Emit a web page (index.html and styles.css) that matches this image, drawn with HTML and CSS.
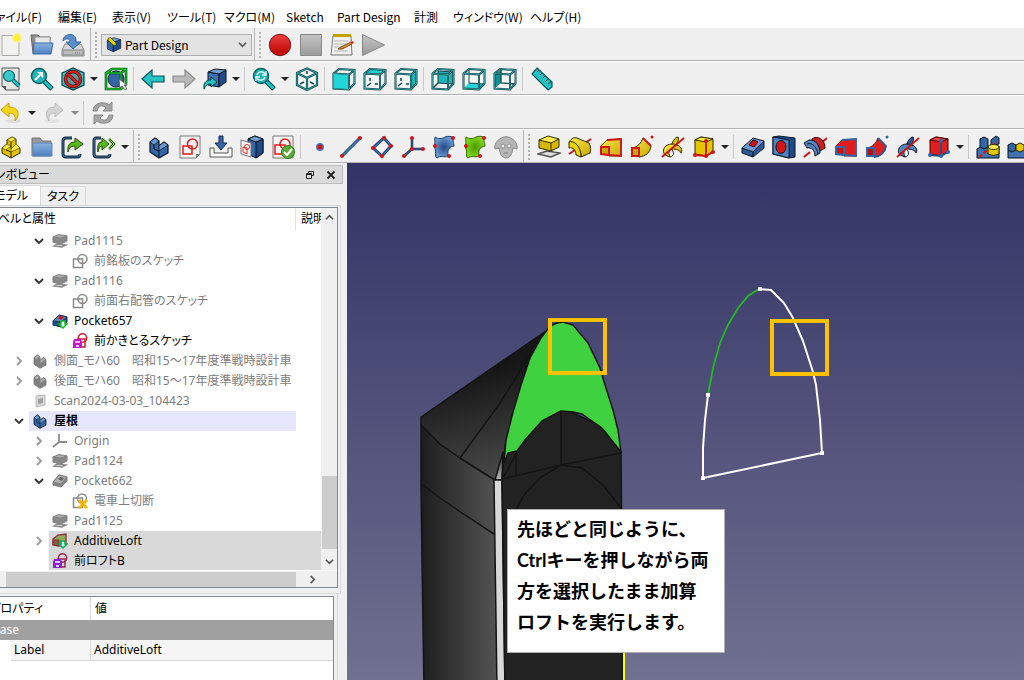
FILE: index.html
```html
<!DOCTYPE html>
<html lang="ja">
<head>
<meta charset="utf-8">
<title>Part Design</title>
<link rel="stylesheet" href="styles.css">
</head>
<body>
<svg class="sprite" aria-hidden="true">
<defs>
<linearGradient id="g-gray" x1="0" y1="0" x2="0" y2="1"><stop offset="0" stop-color="#c4c4c4"/><stop offset="1" stop-color="#9a9a9a"/></linearGradient>
<linearGradient id="g-blue" x1="0" y1="0" x2="0" y2="1"><stop offset="0" stop-color="#8db4e0"/><stop offset="1" stop-color="#4d7fc0"/></linearGradient>
<linearGradient id="g-red" x1="0" y1="0" x2="0" y2="1"><stop offset="0" stop-color="#f04040"/><stop offset="1" stop-color="#b80000"/></linearGradient>
<linearGradient id="g-yel" x1="0" y1="0" x2="1" y2="1"><stop offset="0" stop-color="#fce94f"/><stop offset="1" stop-color="#c9a800"/></linearGradient>
<radialGradient id="g-surf"><stop offset="0" stop-color="#214a83"/><stop offset="1" stop-color="#6b9bd2"/></radialGradient>
<radialGradient id="g-surfg"><stop offset="0" stop-color="#4e9a06"/><stop offset="1" stop-color="#7fd81c"/></radialGradient>
</defs>
<symbol id="new" viewBox="0 0 24 24"><path d="M3 2.500h17v20H3z" fill="#f2f2f0" stroke="#a9a9a4"/><circle cx="18" cy="5" r="5" fill="#f7f08a"/><circle cx="18" cy="5" r="3" fill="#fff12b"/></symbol>
<symbol id="open" viewBox="0 0 24 24"><path d="M1 2h7l2 2h10v16H3z" fill="#8b8b8b" stroke="#666"/><path d="M5 4h15v12H5z" fill="#e8e8e8" stroke="#999"/><path d="M4 10h19l-2 11H3z" fill="url(#g-blue)" stroke="#3b6cac"/></symbol>
<symbol id="save" viewBox="0 0 24 24"><path d="M4 11h16l3 6v6H1v-6z" fill="#d6d6d6" stroke="#888"/><path d="M2 17h20v5H2z" fill="#bdbdbd" stroke="#888"/><path d="M14 20h6" stroke="#777" stroke-dasharray="1 1"/><path d="M2 8c0-8 13-9 13-1v2h5l-8 7-7-7h4c0-4-4-4-7-1z" fill="#5a8ec8" stroke="#3465a4"/></symbol>
<symbol id="pd" viewBox="0 0 24 24"><path d="M2 5l9 3v14l-9-4z" fill="#3465a4" stroke="#0b1521"/><path d="M11 8l11-4v13l-11 5z" fill="#204a87" stroke="#0b1521"/><path d="M2 5l10-4 10 3-11 4z" fill="#729fcf" stroke="#0b1521"/><path d="M3 2l4-1 8 8 0 4-4-1-8-7z" fill="#edd400" stroke="#302b00"/></symbol>
<symbol id="rec" viewBox="0 0 24 24"><circle cx="12" cy="12" r="10.700" fill="url(#g-red)" stroke="#7d1414"/></symbol>
<symbol id="stop" viewBox="0 0 24 24"><path d="M1.500 1.500h21v21h-21z" fill="url(#g-gray)" stroke="#888"/></symbol>
<symbol id="edit" viewBox="0 0 24 24"><path d="M3 3h18l1 19H1z" fill="#f0f0ee" stroke="#777"/><path d="M3 1h18v3H3z" fill="#c4a000"/><path d="M4 8h14M4 11h12M4 14h10M4 18h14" stroke="#b5b5b5"/><path d="M8 16l3-2 10-5 1 2-10 5z" fill="#e0943a" stroke="#7d4a12"/><path d="M20 9l3-1 1 2-2 1z" fill="#d33"/></symbol>
<symbol id="play" viewBox="0 0 24 24"><path d="M1.500 1.500l22 10.500-22 10.500z" fill="url(#g-gray)" stroke="#888"/></symbol>
<symbol id="fitpage" viewBox="0 0 24 24"><path d="M3 1h17v22H7l-4-4z" fill="#e4e4e4" stroke="#555"/><path d="M3 19h4v4" fill="#555"/><path d="M14 13l6 6" stroke="#0b3d40" stroke-width="4"/><path d="M14 13l6 6" stroke="#16c8ca" stroke-width="2.500"/><circle cx="10" cy="9" r="5.500" fill="#35c8c8" stroke="#0b5f62" stroke-width="1.200"/></symbol>
<symbol id="fit" viewBox="0 0 24 24"><path d="M13 13l9 9" stroke="#0b3d40" stroke-width="5"/><path d="M13 13l8.500 8.500" stroke="#16c8ca" stroke-width="3"/><circle cx="9" cy="9" r="7.500" fill="#22b4b6" stroke="#0b5f62" stroke-width="1.500"/><path d="M5 13l5-5" stroke="#fff" stroke-width="2"/><path d="M7 5h6v6z" fill="#fff"/></symbol>
<symbol id="nodraw" viewBox="0 0 24 24"><path d="M1 6L12 1l11 5v12l-11 5-11-5z" fill="#25c9cb" stroke="#0b3d40" stroke-width="1.200"/><circle cx="12" cy="12" r="7.500" fill="#5b9a9c" stroke="#550b0b" stroke-width="3.500"/><circle cx="12" cy="12" r="7.500" fill="none" stroke="#d92020" stroke-width="2.200"/><path d="M6.500 7l11 10" stroke="#550b0b" stroke-width="3.500"/><path d="M6.500 7l11 10" stroke="#d92020" stroke-width="2.200"/></symbol>
<symbol id="boxsel" viewBox="0 0 24 24"><path d="M2 6l6-4h14v15l-5 5H2z" fill="#eef4ee"/><circle cx="12" cy="12" r="8" fill="#3465a4" stroke="#12294a"/><path d="M2 6l6-4h14v15l-5 5H2zM2 6h15v16M17 6l5-4" fill="none" stroke="#064d0e" stroke-width="2.600"/><path d="M2 6l6-4h14v15l-5 5H2zM2 6h15v16M17 6l5-4" fill="none" stroke="#17b92b" stroke-width="1.400"/><path d="M15 12l1 9 2-2 3 4 2-1-3-4h3z" fill="#fff" stroke="#555" stroke-width=".8"/></symbol>
<symbol id="left" viewBox="0 0 24 24"><path d="M1 12l10-9v6h12v6H11v6z" fill="#26c4c6" stroke="#0b5558" stroke-width="1.200"/></symbol>
<symbol id="right" viewBox="0 0 24 24"><path d="M23 12L13 3v6H1v6h12v6z" fill="#b9b9b9" stroke="#8c8c8c" stroke-width="1.200"/></symbol>
<symbol id="link" viewBox="0 0 24 24"><path d="M5 5l11 2v13L5 18z" fill="#3c6fb0" stroke="#0b1521"/><path d="M16 7l7-4v12l-7 5z" fill="#204a87" stroke="#0b1521"/><path d="M5 5l7-3 11 1-7 4z" fill="#6f9fd6" stroke="#0b1521"/><path d="M1 22c-1-8 4-9 7-9v-3l6 5-6 5v-3c-3 0-5 1-7 5z" fill="#26c4c6" stroke="#0b3d40"/></symbol>
<symbol id="sync" viewBox="0 0 24 24"><path d="M13 13l9 9" stroke="#0b3d40" stroke-width="5"/><path d="M13 13l8.500 8.500" stroke="#16c8ca" stroke-width="3"/><circle cx="9" cy="9" r="7.500" fill="#22b4b6" stroke="#0b5f62" stroke-width="1.500"/><path d="M5 8c1-4 7-4 8-1M13 10c-1 4-7 4-8 1M14 4v4h-4M4 14v-4h4" stroke="#e4ffff" fill="none" stroke-width="1.300"/></symbol>
<symbol id="iso" viewBox="0 0 24 24"><path d="M12 1.500L22 6v12l-10 5-10-5V6zM2 6l10 5 10-5M12 11v12" fill="#f7f7f7" stroke="#0b4549" stroke-width="2.200"/><path d="M12 4v3M5 17l4-2M19 17l-4-2" stroke="#0b4549" stroke-width="1.500"/><path d="M12 1.500L22 6v12l-10 5-10-5V6zM2 6l10 5 10-5M12 11v12" fill="none" stroke="#39b9bb" stroke-width=".8"/></symbol>
<symbol id="frame" viewBox="0 0 24 24"><path d="M1.500 6.500L7 2l15.500 1v13.500L17 22.500l-15.500-1zM1.500 6.500L17 7.500v15M17 7.500L22.500 3" fill="none" stroke="#0b4549" stroke-width="2"/><path d="M1.500 6.500L7 2l15.500 1v13.500L17 22.500l-15.500-1zM1.500 6.500L17 7.500v15M17 7.500L22.500 3" fill="none" stroke="#48b4b6" stroke-width=".7"/></symbol>
<symbol id="front" viewBox="0 0 24 24"><path d="M2 6l5-4 15 1v14l-5 5-15-1z" fill="#eee"/><use href="#frame"/><path d="M2 7l14 1v14L2 21z" fill="#22d6d8"/></symbol>
<symbol id="top" viewBox="0 0 24 24"><path d="M2 6l15 1 5-4v14l-5 5-15-1z" fill="#f7f7f7"/><path d="M7 11v3M4 19l4-3M12 17h3" stroke="#0b4549" stroke-width="1.500"/><path d="M2 6l5-4 15 1-5 4z" fill="#22d6d8"/><use href="#frame"/></symbol>
<symbol id="rside" viewBox="0 0 24 24"><path d="M2 6l5-4 15 1-5 19-15-1z" fill="#f7f7f7"/><path d="M7 11v3M4 19l4-3M12 17h3" stroke="#0b4549" stroke-width="1.500"/><path d="M17 7l5-4v14l-5 5z" fill="#20b4b8"/><use href="#frame"/></symbol>
<symbol id="rear" viewBox="0 0 24 24"><path d="M2 6l5-4 15 1v14l-5 5-15-1z" fill="#f7f7f7"/><path d="M7 4l15 1v12L7 16z" fill="#20b4b8" stroke="#0b4549"/><path d="M2 21l5-5" stroke="#0b4549" stroke-width="1.500"/><use href="#frame"/></symbol>
<symbol id="bottom" viewBox="0 0 24 24"><path d="M2 6l5-4 15 1v14l-5 5-15-1z" fill="#f7f7f7"/><path d="M2 21l5-5 15 1-5 5z" fill="#22d6d8"/><path d="M7 2v14l15 1" stroke="#0b4549" fill="none"/><use href="#frame"/></symbol>
<symbol id="lside" viewBox="0 0 24 24"><path d="M2 6l5-4 15 1v14l-5 5-15-1z" fill="#f7f7f7"/><path d="M2 7l6-4v13l-6 5z" fill="#168f94"/><path d="M8 2v14l14 1" stroke="#0b4549" fill="none" stroke-width="1.300"/><use href="#frame"/></symbol>
<symbol id="ruler" viewBox="0 0 24 24"><path d="M7 1l15 14v5l-4 3L2 7z" fill="#22c4c6" stroke="#0b5558" stroke-width="1.200"/><path d="M9 3L7 5M12 6l-2 2M15 9l-2 2M18 12l-3 3M21 15l-3 2" stroke="#0b3d40"/></symbol>
<symbol id="undo" viewBox="0 0 24 24"><ellipse cx="14" cy="20" rx="8" ry="2" fill="#ddd"/><path d="M2 9l8-7v4c9 0 12 7 6 14 1-6-2-8-6-8v4z" fill="#f4d51c" stroke="#c4a000"/></symbol>
<symbol id="redo" viewBox="0 0 24 24"><ellipse cx="10" cy="20" rx="8" ry="2" fill="#e2e2e2"/><path d="M21 9l-8-7v4C4 6 2 13 7 20c-1-6 2-8 6-8v4z" fill="#d4d4d4" stroke="#bbb"/></symbol>
<symbol id="refresh" viewBox="0 0 24 24"><path d="M2 10c0-9 12-10 16-6l3-3v9h-9l3-3c-4-4-8-2-9 3zM22 14c0 9-12 10-16 6l-3 3v-9h9l-3 3c4 4 8 2 9-3z" fill="#a5a5a5" stroke="#8b8b8b"/></symbol>
<symbol id="part" viewBox="0 0 24 24"><path d="M3 13l5-4V5l5-3 4 2v5l4 4v5l-9 5-9-5z" fill="#e2c300" stroke="#302b00"/><path d="M8 5l5-3 4 2-5 3zM3 13l5-4 4 2-5 4zM12 14l5-5 4 4-9 4z" fill="#fce94f" stroke="#6b5b00" stroke-width=".8"/><path d="M12 7v7M7 15l5 2v6" fill="none" stroke="#302b00"/></symbol>
<symbol id="folder" viewBox="0 0 24 24"><path d="M2 3h8l2 3h9v15H2z" fill="#999" stroke="#777"/><path d="M3 8h19v13H3z" fill="url(#g-blue)" stroke="#5c87bd"/></symbol>
<symbol id="export" viewBox="0 0 24 24"><path d="M11 3H5q-3 0-3 3v13q0 3 3 3h11q3 0 3-3" fill="none" stroke="#152c48" stroke-width="3"/><path d="M11 3H5q-3 0-3 3v13q0 3 3 3h11q3 0 3-3" fill="none" stroke="#3b6185" stroke-width="1.200"/><path d="M7 17c-1-8 3-10 7-10V3l8 6-8 6v-4c-4 0-6 2-7 6z" fill="#5cb81b" stroke="#1d4b00"/></symbol>
<symbol id="export2" viewBox="0 0 24 24"><path d="M9 3H4Q2 3 2 6v13q0 3 3 3h10q3 0 3-3" fill="none" stroke="#152c48" stroke-width="3"/><path d="M9 3H4Q2 3 2 6v13q0 3 3 3h10q3 0 3-3" fill="none" stroke="#3b6185" stroke-width="1.200"/><path d="M6 17C5 9 7 7 10 7V3l7 6-7 6v-4c-2 0-3 2-4 6z" fill="#5cb81b" stroke="#1d4b00"/><path d="M17 4l5 5-5 5" fill="none" stroke="#2d6a04" stroke-width="2.500"/><path d="M17 4l5 5-5 5" fill="none" stroke="#73c83a"/></symbol>
<symbol id="body" viewBox="0 0 24 24"><path d="M3 7l5-4 4 3v5l5-4 4 3v8l-9 5-9-6z" fill="#3465a4" stroke="#0b1521" stroke-width="1.200"/><path d="M3 7l5-4 4 3-5 4zM12 11l5-4 4 3-9 6z" fill="#6b9bd2" stroke="#0b1521" stroke-width=".8"/><path d="M7 10v4l5 2v7" fill="none" stroke="#0b1521"/></symbol>
<symbol id="bodyg" viewBox="0 0 24 24"><path d="M3 7l5-4 4 3v5l5-4 4 3v8l-9 5-9-6z" fill="#808080" stroke="#777" stroke-width="1.200"/><path d="M3 7l5-4 4 3-5 4zM12 11l5-4 4 3-9 6z" fill="#ababab" stroke="#777"/></symbol>
<symbol id="sketch" viewBox="0 0 24 24"><path d="M2 1h20v18l-4 4H2z" fill="#f5f5f5" stroke="#777"/><path d="M22 19h-4v4z" fill="#777"/><g fill="none" stroke="#e01b1b" stroke-width="1.500"><path d="M5 11h9v8H5z"/><circle cx="14.500" cy="9" r="5"/></g></symbol>
<symbol id="map" viewBox="0 0 24 24"><path d="M1 13h4v5h14v-5h4v9H1z" fill="#fff" stroke="#555"/><path d="M10 1h4v7h4l-6 7-6-7h4z" fill="#3465a4" stroke="#12294a"/></symbol>
<symbol id="shape" viewBox="0 0 24 24"><path d="M8 4l7-3 8 3v14l-7 5-8-4z" fill="#3465a4" stroke="#0b1521"/><path d="M16 7l7-3v14l-7 5z" fill="#204a87" stroke="#0b1521"/><path d="M8 4l7-3 8 3-7 3z" fill="#729fcf" stroke="#0b1521"/><path d="M1 5l10 3v14L1 19z" fill="#f5f5f5" stroke="#777"/><g fill="none" stroke="#e03030"><path d="M3 12l4 1v6l-4-2z"/><circle cx="7" cy="12" r="2.500"/></g></symbol>
<symbol id="valid" viewBox="0 0 24 24"><path d="M2 1h20v22H2z" fill="#f5f5f5" stroke="#777"/><path d="M4 10h10v9H4z" fill="none" stroke="#e01b1b" stroke-width="1.500"/><circle cx="14" cy="9" r="5" fill="none" stroke="#e01b1b" stroke-width="1.500"/><circle cx="17" cy="17" r="6.500" fill="#5cab3a" stroke="#337518"/><path d="M13 17l3 3 5-6" fill="none" stroke="#fff" stroke-width="2"/></symbol>
<symbol id="point" viewBox="0 0 24 24"><circle cx="12" cy="12" r="4" fill="#4779b8"/><circle cx="12" cy="12" r="2.500" fill="#d31515"/></symbol>
<symbol id="line" viewBox="0 0 24 24"><path d="M3 21L21 3" stroke="#122d50" stroke-width="3"/><path d="M3 21L21 3" stroke="#3c73b5" stroke-width="1.800"/><g fill="#d31515"><circle cx="3" cy="21" r="2"/><circle cx="21" cy="3" r="2"/></g></symbol>
<symbol id="plane" viewBox="0 0 24 24"><path d="M14 3l7 8-9 10-9-8z" fill="none" stroke="#122d50" stroke-width="3"/><path d="M14 3l7 8-9 10-9-8z" fill="none" stroke="#3c73b5" stroke-width="1.500"/><g fill="#d31515"><circle cx="14" cy="3" r="2"/><circle cx="21" cy="11" r="2"/><circle cx="12" cy="21" r="2"/><circle cx="3" cy="13" r="2"/></g></symbol>
<symbol id="lcs" viewBox="0 0 24 24"><path d="M11 3v11h11M11 14l-8 7" fill="none" stroke="#122d50" stroke-width="2.500"/><path d="M11 3v11h11M11 14l-8 7" fill="none" stroke="#3c73b5"/><g fill="#d31515"><circle cx="11" cy="3" r="2"/><circle cx="22" cy="14" r="2"/><circle cx="11" cy="14" r="2"/><circle cx="3" cy="21" r="2"/></g></symbol>
<symbol id="surf" viewBox="0 0 24 24"><path d="M3 2c3 2 7 2 10 0 3-1 6-1 9 1-2 2 0 5 0 8-4 1-7 2-6 10-4 2-7-1-11 2-3-1 0-7-3-12 2-3 0-6 1-9z" fill="url(#g-surf)" stroke="#173a67"/><g fill="#d31515"><circle cx="21" cy="3" r="2"/><circle cx="3" cy="11" r="2"/><circle cx="17" cy="21" r="2"/></g></symbol>
<symbol id="surfg" viewBox="0 0 24 24"><path d="M3 2c3 2 7 2 10 0 3-1 6-1 9 1-2 2 0 5 0 8-4 1-7 2-6 10-4 2-7-1-11 2-3-1 0-7-3-12 2-3 0-6 1-9z" fill="url(#g-surfg)" stroke="#2f6600"/><g fill="#d31515"><circle cx="21" cy="3" r="2"/><circle cx="3" cy="11" r="2"/><circle cx="17" cy="21" r="2"/></g></symbol>
<symbol id="clone" viewBox="0 0 24 24"><path d="M6 4c3-3 9-3 12 0 3 1 6 6 5 10l-4-1c-1 6-3 10-7 10s-6-4-7-10l-4 1C0 10 3 5 6 4z" fill="#b5b5b5" stroke="#888"/><circle cx="9" cy="11" r="2" fill="#eee" stroke="#888"/><circle cx="15" cy="11" r="2" fill="#eee" stroke="#888"/><path d="M10 18h4" stroke="#888"/></symbol>
<symbol id="pad" viewBox="0 0 24 24"><path d="M1 19l9-3 13 2-9 4z" fill="#ddd" stroke="#555" stroke-width="1.500"/><path d="M2 5v8l12 3 8-4V4z" fill="#d7b600" stroke="#302b00"/><path d="M2 5l9-4 11 3-8 4z" fill="#fce94f" stroke="#302b00"/><path d="M14 8v8" stroke="#302b00"/></symbol>
<symbol id="revolve" viewBox="0 0 24 24"><path d="M1 19L23 4" stroke="#c11" stroke-width="2"/><path d="M1 7c3-4 5-5 8-4l12 5c2 4 2 7 1 10l-9 4c0-3 0-5-2-8z" fill="url(#g-yel)" stroke="#302b00"/><path d="M1 7c5-2 12 4 12 15l-5-2c0-5-3-8-7-7z" fill="#edd400" stroke="#302b00"/></symbol>
<symbol id="loft" viewBox="0 0 24 24"><path d="M2 11l6-6 14-1v17l-12 0z" fill="url(#g-yel)" stroke="#746000"/><path d="M8 5l14-1v17l-12-1" fill="none" stroke="#c11" stroke-width="1.800"/><path d="M2 12h8v8l-8-1z" fill="#c9a800" stroke="#d31515" stroke-width="2"/></symbol>
<symbol id="pipe" viewBox="0 0 24 24"><path d="M2 13c6-1 9-5 11-10l8 8c-1 7-5 10-12 11z" fill="url(#g-yel)" stroke="#302b00"/><path d="M13 3l8 8" stroke="#c11" stroke-width="2"/><path d="M2 13h7v8H2z" fill="#c9a800" stroke="#d31515" stroke-width="2"/><circle cx="22" cy="2" r="1.500" fill="#c11"/></symbol>
<symbol id="helix" viewBox="0 0 24 24"><path d="M10 12c1-5 4-10 7-10 2 3-2 5-1 9" fill="#e0c000" stroke="#302b00"/><path d="M4 20c-4-5 0-11 7-11 6 0 12 4 9 9-1-3-5-4-9-4-3 0-4 4-2 8z" fill="url(#g-yel)" stroke="#302b00"/><path d="M9 22c5-1 4-6 1-8" fill="none" stroke="#302b00"/><path d="M1 22L23 3" stroke="#c11" stroke-width="1.800"/></symbol>
<symbol id="prim" viewBox="0 0 24 24"><path d="M3 5l6-3 12 2v12l-7 5-11-2z" fill="#e5c700" stroke="#302b00"/><path d="M3 5l6-3 12 2-7 3z" fill="#fce94f" stroke="#302b00"/><path d="M14 6v15M3 20l11 1 7-4" fill="none" stroke="#c11" stroke-width="1.800"/><g fill="#d31515"><circle cx="14" cy="6" r="2"/><circle cx="3" cy="20" r="2"/><circle cx="14" cy="21" r="2"/><circle cx="21" cy="17" r="2"/></g></symbol>
<symbol id="pocket" viewBox="0 0 24 24"><path d="M1 13v5l11 4 11-9V6z" fill="#2d5a96" stroke="#0b1521"/><path d="M1 13L12 3l11 3-11 11z" fill="#6b9bd2" stroke="#0b1521"/><path d="M8 10l4-5 5 2-4 5z" fill="#d31515" stroke="#400"/><path d="M12 17v5" stroke="#0b1521"/></symbol>
<symbol id="hole" viewBox="0 0 24 24"><path d="M1 2l6-1 16 2v19l-6 1-16-4z" fill="#204a87" stroke="#0b1521"/><path d="M1 2l16 3v18L1 19z" fill="#4f83c1" stroke="#0b1521"/><ellipse cx="9" cy="12" rx="5" ry="6.500" fill="#d31515" stroke="#0b1521"/></symbol>
<symbol id="groove" viewBox="0 0 24 24"><path d="M1 22l6-5M16 10l8-7" stroke="#c11" stroke-width="2"/><path d="M9 4c5-4 13 0 13 9l-5 3c-1-6-4-10-8-9z" fill="#c92020" stroke="#400"/><path d="M1 8l5-3c7-1 11 6 11 13l-5 3c0-6-4-9-8-8z" fill="#5485bf" stroke="#0b1521"/><path d="M4 9c5-2 10 3 11 10" fill="none" stroke="#0b1521"/></symbol>
<symbol id="sloft" viewBox="0 0 24 24"><path d="M2 11l6-6 14-1v17l-12 0z" fill="#e11d1d" stroke="#700"/><path d="M8 5l14-1v17l-12-1" fill="none" stroke="#3465a4" stroke-width="1.800"/><path d="M2 12h8v8l-8-1z" fill="#c11" stroke="#3465a4" stroke-width="2"/></symbol>
<symbol id="spipe" viewBox="0 0 24 24"><path d="M2 13c6-1 9-5 11-10l8 8c-1 7-5 10-12 11z" fill="#e11d1d" stroke="#500"/><path d="M13 3l8 8c-1 6-5 10-12 11" fill="none" stroke="#2d5a96" stroke-width="1.800"/><path d="M2 13h7v8H2z" fill="#a11" stroke="#3465a4" stroke-width="2"/><circle cx="22" cy="2" r="1.500" fill="#3465a4"/></symbol>
<symbol id="shelix" viewBox="0 0 24 24"><path d="M10 12c1-5 4-10 7-10 2 3-2 5-1 9" fill="#2d5a96" stroke="#0b1521"/><path d="M4 20c-4-5 0-11 7-11 6 0 12 4 9 9-1-3-5-4-9-4-3 0-4 4-2 8z" fill="#5485bf" stroke="#0b1521"/><path d="M9 22c5-1 4-6 1-8" fill="none" stroke="#0b1521"/><path d="M1 22L23 3" stroke="#c11" stroke-width="1.800"/></symbol>
<symbol id="sprim" viewBox="0 0 24 24"><path d="M3 5l6-3 12 2v12l-7 5-11-2z" fill="#e11d1d" stroke="#400"/><path d="M3 5l6-3 12 2-7 3z" fill="#ef4040" stroke="#400"/><path d="M14 6v15M3 20l11 1 7-4" fill="none" stroke="#244f88" stroke-width="1.800"/><g fill="#3465a4"><circle cx="14" cy="6" r="2"/><circle cx="3" cy="20" r="2"/><circle cx="14" cy="21" r="2"/><circle cx="21" cy="17" r="2"/></g></symbol>
<symbol id="mirror" viewBox="0 0 24 24"><path d="M1 14l5-3h17v12H1z" fill="#3f73b2" stroke="#0b1521"/><path d="M4 4l4-2 4 2v8l-4 2-4-2zM15 5l5-4 3 2v6l-8 2z" fill="#3465a4" stroke="#0b1521"/><path d="M3 22L22 6" stroke="#d31515" stroke-width="2" stroke-dasharray="4 2"/><path d="M12 12v7q5 3 11 0v-7z" fill="#e5c700" stroke="#302b00"/><ellipse cx="17.500" cy="12" rx="5.500" ry="2.500" fill="#fce94f" stroke="#302b00"/></symbol>
<symbol id="pattern" viewBox="0 0 24 24"><path d="M1 15l8-5h15v13H1z" fill="#3f73b2" stroke="#0b1521"/><path d="M1 10l4-2 4 2v5l-4 2-4-2z" fill="#3465a4" stroke="#0b1521"/><path d="M9 10l4-2 4 2v5l-4 2-4-2z" fill="#e5c700" stroke="#302b00"/><path d="M18 10l4-2 3 2v5l-3 2-4-2z" fill="#e5c700" stroke="#302b00"/></symbol>
<symbol id="t-pad" viewBox="0 0 16 16"><path d="M2 13l3-2 9 1-4 2z" fill="#ddd" stroke="#8a8a8a" stroke-width="1.500"/><path d="M1 4v5l8 2 6-3V3z" fill="#888" stroke="#808080"/><path d="M1 4l6-2.500L15 3 9 5z" fill="#b0b0b0" stroke="#808080"/></symbol>
<symbol id="t-sk" viewBox="0 0 16 16"><path d="M1.500 6h9v8.500h-9z" fill="none" stroke="#8a8a8a" stroke-width="1.500"/><circle cx="10.500" cy="6" r="4.500" fill="none" stroke="#8a8a8a" stroke-width="1.500"/></symbol>
<symbol id="t-pocket" viewBox="0 0 16 16"><path d="M1 9l6-7 8 2v4l-6 6-8-2z" fill="#858585" stroke="#808080"/><path d="M1 9l6-7 8 2-6 7z" fill="#b0b0b0" stroke="#808080"/><path d="M6 6l2-2 4 1-2 3z" fill="#666"/></symbol>
<symbol id="t-pocketc" viewBox="0 0 16 16"><path d="M1 8l6-6 8 2v5l-6 5-8-2z" fill="#274f86" stroke="#173152"/><path d="M1 8l6-6 8 2-6 5z" fill="#5589c6" stroke="#173152"/><path d="M6 5l2-2 4 1-3 3z" fill="#d31515"/><path d="M9 8h4v3h2l-4 4-4-4h2z" fill="#fff" stroke="#0abf18" stroke-width="1.500"/></symbol>
<symbol id="t-skr" viewBox="0 0 16 16"><circle cx="10.500" cy="5" r="4.200" fill="none" stroke="#c8202c" stroke-width="1.500"/><path d="M6 6h7v8H6z" fill="none" stroke="#c8202c" stroke-width="1.500"/><path d="M2 6h7l1 3v6H1V9z" fill="#c913c9"/><path d="M3 9h5M4 13h3" stroke="#fff" stroke-width="1.500"/></symbol>
<symbol id="t-skp" viewBox="0 0 16 16"><circle cx="10.500" cy="5" r="4.200" fill="none" stroke="#9c2b4c" stroke-width="1.500"/><path d="M6 6h7v8H6z" fill="none" stroke="#9c2b4c" stroke-width="1.500"/><path d="M2 6h7l1 3v6H1V9z" fill="#8a22d6"/><path d="M3 9h5M4 13h3" stroke="#fff" stroke-width="1.500"/></symbol>
<symbol id="t-img" viewBox="0 0 16 16"><path d="M4 3l9-1v10l-9 2z" fill="#d8d8d8" stroke="#bbb"/><path d="M6 6l5-1v5l-5 1z" fill="#a0a0a0"/></symbol>
<symbol id="t-origin" viewBox="0 0 16 16"><path d="M7 1v8h8M7 9l-6 5" stroke="#8c8c8c" fill="none" stroke-width="1.800"/></symbol>
<symbol id="t-skx" viewBox="0 0 16 16"><path d="M1.500 5h9v9.500h-9z" fill="none" stroke="#8a8a8a" stroke-width="1.500"/><circle cx="10" cy="5.500" r="4.500" fill="none" stroke="#8a8a8a" stroke-width="1.500"/><path d="M7 7l8 8M15 7l-8 8" stroke="#f2b600" stroke-width="3"/></symbol>
<symbol id="t-loft" viewBox="0 0 16 16"><path d="M1 6l5-4 8-1v10l-7 2-6-1z" fill="#8faa58" stroke="#8d2b3e" stroke-width="1.300"/><path d="M1 7h6v6l-6-1z" fill="#8c5b3a" stroke="#8d2b3e"/><path d="M9 8h4v3h2l-4 4-4-4h2z" fill="#d0f4ff" stroke="#0aa94a" stroke-width="1.500"/></symbol>
<symbol id="c-down" viewBox="0 0 10 10"><path d="M1 3l4 4 4-4" fill="none" stroke="currentColor" stroke-width="1.800"/></symbol>
<symbol id="c-up" viewBox="0 0 10 10"><path d="M1 7l4-4 4 4" fill="none" stroke="currentColor" stroke-width="1.800"/></symbol>
<symbol id="c-right" viewBox="0 0 10 10"><path d="M3 1l4 4-4 4" fill="none" stroke="currentColor" stroke-width="1.800"/></symbol>
</svg>

<nav class="menubar">
<a class="tail" href="#">ファイル(F)</a><a href="#">編集(E)</a><a href="#">表示(V)</a><a href="#">ツール(T)</a><a href="#">マクロ(M)</a><a href="#">Sketch</a><a href="#">Part Design</a><a href="#">計測</a><a href="#">ウィンドウ(W)</a><a href="#">ヘルプ(H)</a>
</nav>

<div class="toolbar">
<button class="tool" aria-label="新規"><svg><use href="#new"/></svg></button>
<button class="tool" aria-label="開く"><svg><use href="#open"/></svg></button>
<button class="tool" aria-label="保存"><svg><use href="#save"/></svg></button>
<span class="grip"></span>
<div class="combo"><svg><use href="#pd"/></svg><select aria-label="ワークベンチ"><option>Part Design</option></select><svg class="chev"><use href="#c-down"/></svg></div>
<span class="grip"></span>
<button class="tool" aria-label="記録"><svg><use href="#rec"/></svg></button>
<button class="tool" aria-label="停止"><svg><use href="#stop"/></svg></button>
<button class="tool" aria-label="マクロ編集"><svg><use href="#edit"/></svg></button>
<button class="tool" aria-label="実行"><svg><use href="#play"/></svg></button>
</div>

<div class="toolbar">
<button class="tool" aria-label="全体表示"><svg><use href="#fitpage"/></svg></button>
<button class="tool" aria-label="選択にフィット"><svg><use href="#fit"/></svg></button>
<button class="tool" aria-label="描画スタイル"><svg><use href="#nodraw"/></svg></button>
<button class="drop" aria-label="描画スタイル一覧"></button>
<button class="tool" aria-label="ボックス選択"><svg><use href="#boxsel"/></svg></button>
<span class="sep"></span>
<button class="tool" aria-label="戻る"><svg><use href="#left"/></svg></button>
<button class="tool" aria-label="進む"><svg><use href="#right"/></svg></button>
<button class="tool" aria-label="リンク"><svg><use href="#link"/></svg></button>
<button class="drop" aria-label="リンク一覧"></button>
<span class="sep"></span>
<button class="tool" aria-label="同期"><svg><use href="#sync"/></svg></button>
<button class="drop" aria-label="同期一覧"></button>
<button class="tool" aria-label="等角図"><svg><use href="#iso"/></svg></button>
<span class="sep"></span>
<button class="tool" aria-label="正面"><svg><use href="#front"/></svg></button>
<button class="tool" aria-label="上面"><svg><use href="#top"/></svg></button>
<button class="tool" aria-label="右面"><svg><use href="#rside"/></svg></button>
<span class="sep"></span>
<button class="tool" aria-label="背面"><svg><use href="#rear"/></svg></button>
<button class="tool" aria-label="底面"><svg><use href="#bottom"/></svg></button>
<button class="tool" aria-label="左面"><svg><use href="#lside"/></svg></button>
<span class="sep"></span>
<button class="tool" aria-label="距離計測"><svg><use href="#ruler"/></svg></button>
</div>

<div class="toolbar">
<button class="tool" aria-label="元に戻す"><svg><use href="#undo"/></svg></button>
<button class="drop" aria-label="元に戻す一覧"></button>
<button class="tool" aria-label="やり直す"><svg><use href="#redo"/></svg></button>
<button class="drop dim" aria-label="やり直す一覧"></button>
<span class="sep"></span>
<button class="tool" aria-label="更新"><svg><use href="#refresh"/></svg></button>
</div>

<div class="toolbar">
<button class="tool" aria-label="パート"><svg><use href="#part"/></svg></button>
<button class="tool" aria-label="グループ"><svg><use href="#folder"/></svg></button>
<button class="tool" aria-label="リンク作成"><svg><use href="#export"/></svg></button>
<button class="tool" aria-label="リンク操作"><svg><use href="#export2"/></svg></button>
<button class="drop" aria-label="リンク操作一覧"></button>
<span class="grip"></span>
<button class="tool" aria-label="ボディ"><svg><use href="#body"/></svg></button>
<button class="tool" aria-label="スケッチ"><svg><use href="#sketch"/></svg></button>
<button class="tool" aria-label="マップ"><svg><use href="#map"/></svg></button>
<button class="tool" aria-label="シェイプ"><svg><use href="#shape"/></svg></button>
<button class="tool" aria-label="検証"><svg><use href="#valid"/></svg></button>
<span class="sep"></span>
<button class="tool" aria-label="点"><svg><use href="#point"/></svg></button>
<button class="tool" aria-label="線"><svg><use href="#line"/></svg></button>
<button class="tool" aria-label="平面"><svg><use href="#plane"/></svg></button>
<button class="tool" aria-label="座標系"><svg><use href="#lcs"/></svg></button>
<button class="tool" aria-label="シェイプバインダー"><svg><use href="#surf"/></svg></button>
<button class="tool" aria-label="サブシェイプバインダー"><svg><use href="#surfg"/></svg></button>
<button class="tool" aria-label="クローン"><svg><use href="#clone"/></svg></button>
<span class="grip"></span>
<button class="tool" aria-label="パッド"><svg><use href="#pad"/></svg></button>
<button class="tool" aria-label="レボリューション"><svg><use href="#revolve"/></svg></button>
<button class="tool" aria-label="加算ロフト"><svg><use href="#loft"/></svg></button>
<button class="tool" aria-label="加算パイプ"><svg><use href="#pipe"/></svg></button>
<button class="tool" aria-label="加算らせん"><svg><use href="#helix"/></svg></button>
<button class="tool" aria-label="加算プリミティブ"><svg><use href="#prim"/></svg></button>
<button class="drop" aria-label="加算プリミティブ一覧"></button>
<span class="sep"></span>
<button class="tool" aria-label="ポケット"><svg><use href="#pocket"/></svg></button>
<button class="tool" aria-label="ホール"><svg><use href="#hole"/></svg></button>
<button class="tool" aria-label="グルーブ"><svg><use href="#groove"/></svg></button>
<button class="tool" aria-label="減算ロフト"><svg><use href="#sloft"/></svg></button>
<button class="tool" aria-label="減算パイプ"><svg><use href="#spipe"/></svg></button>
<button class="tool" aria-label="減算らせん"><svg><use href="#shelix"/></svg></button>
<button class="tool" aria-label="減算プリミティブ"><svg><use href="#sprim"/></svg></button>
<button class="drop" aria-label="減算プリミティブ一覧"></button>
<span class="sep"></span>
<button class="tool" aria-label="鏡像"><svg><use href="#mirror"/></svg></button>
<button class="tool" aria-label="直線状パターン"><svg><use href="#pattern"/></svg></button>
</div>

<main class="work">
<aside class="dock">
<header class="dock-title"><span class="tail">コンボビュー</span>
<button aria-label="フロート"><svg viewBox="0 0 10 10"><path d="M3.500 3V1.500h5v4H7M1.500 3.500h5v5h-5zM1 4.500h6" fill="none" stroke="#222"/></svg></button>
<button aria-label="閉じる"><svg viewBox="0 0 10 10"><path d="M1.500 1.500l7 7M8.500 1.500l-7 7" stroke="#222" stroke-width="1.800"/></svg></button>
</header>
<div class="tabs"><button class="tab on"><span class="tail">モデル</span></button><button class="tab">タスク</button></div>
<section class="pane">
<div class="treebox">
<div class="treecol">
<div class="treehead"><span class="tail">ラベルと属性</span><span>説明</span></div>
<div class="tree">
<div class="row l2"><button aria-label="折りたたむ"><svg><use href="#c-down"/></svg></button><div class="item dim"><svg><use href="#t-pad"/></svg>Pad1115</div></div>
<div class="row l3"><div class="item dim"><svg><use href="#t-sk"/></svg>前銘板のスケッチ</div></div>
<div class="row l2"><button aria-label="折りたたむ"><svg><use href="#c-down"/></svg></button><div class="item dim"><svg><use href="#t-pad"/></svg>Pad1116</div></div>
<div class="row l3"><div class="item dim"><svg><use href="#t-sk"/></svg>前面右配管のスケッチ</div></div>
<div class="row l2"><button aria-label="折りたたむ"><svg><use href="#c-down"/></svg></button><div class="item"><svg><use href="#t-pocketc"/></svg>Pocket657</div></div>
<div class="row l3"><div class="item"><svg><use href="#t-skr"/></svg>前かきとるスケッチ</div></div>
<div class="row l1"><button class="shut" aria-label="展開"><svg><use href="#c-right"/></svg></button><div class="item dim"><svg><use href="#bodyg"/></svg>側面_モハ60　昭和15～17年度準戦時設計車</div></div>
<div class="row l1"><button class="shut" aria-label="展開"><svg><use href="#c-right"/></svg></button><div class="item dim"><svg><use href="#bodyg"/></svg>後面_モハ60　昭和15～17年度準戦時設計車</div></div>
<div class="row l1 leaf"><div class="item dim"><svg><use href="#t-img"/></svg>Scan2024-03-03_104423</div></div>
<div class="row l1"><button aria-label="折りたたむ"><svg><use href="#c-down"/></svg></button><div class="item active"><svg><use href="#body"/></svg>屋根</div></div>
<div class="row l2"><button class="shut" aria-label="展開"><svg><use href="#c-right"/></svg></button><div class="item dim"><svg><use href="#t-origin"/></svg>Origin</div></div>
<div class="row l2"><button class="shut" aria-label="展開"><svg><use href="#c-right"/></svg></button><div class="item dim"><svg><use href="#t-pad"/></svg>Pad1124</div></div>
<div class="row l2"><button aria-label="折りたたむ"><svg><use href="#c-down"/></svg></button><div class="item dim"><svg><use href="#t-pocket"/></svg>Pocket662</div></div>
<div class="row l3"><div class="item dim"><svg><use href="#t-skx"/></svg>電車上切断</div></div>
<div class="row l2 leaf"><div class="item dim"><svg><use href="#t-pad"/></svg>Pad1125</div></div>
<div class="row l2"><button class="shut" aria-label="展開"><svg><use href="#c-right"/></svg></button><div class="item sel"><svg><use href="#t-loft"/></svg>AdditiveLoft</div></div>
<div class="row l2 leaf"><div class="item sel"><svg><use href="#t-skp"/></svg>前ロフトB</div></div>
</div>
</div>
<div class="vbar"><svg><use href="#c-up"/></svg><span class="vtrack"><i></i></span><svg><use href="#c-down"/></svg></div>
<div class="hbar"><i></i><svg><use href="#c-right"/></svg></div>
</div>
</section>
<section class="props">
<table>
<thead><tr><th><span class="tail">プロパティ</span></th><th>値</th></tr></thead>
<tbody><tr class="group"><td colspan="2"><span class="tail">Base</span></td></tr>
<tr class="prop"><td>Label</td><td>AdditiveLoft</td></tr></tbody>
</table>
</section>
</aside>

<section class="view">
<svg class="scene" viewBox="347 163 677 517" preserveAspectRatio="xMinYMin slice" role="img" aria-label="3Dビュー">
<defs>
<linearGradient id="s-side" x1="0" x2="1" y1="0" y2="0"><stop offset="0" stop-color="#1b1b1b"/><stop offset=".15" stop-color="#262626"/><stop offset="1" stop-color="#545454"/></linearGradient>
<linearGradient id="s-roof" gradientUnits="userSpaceOnUse" x1="470" y1="375" x2="497" y2="475"><stop offset="0" stop-color="#161616"/><stop offset=".4" stop-color="#2a2a2a"/><stop offset="1" stop-color="#484848"/></linearGradient>
<linearGradient id="s-strip" x1="0" x2="0" y1="0" y2="1"><stop offset="0" stop-color="#333"/><stop offset="1" stop-color="#b5b5b5"/></linearGradient>
</defs>
<g stroke="#141414" stroke-width="1.500" stroke-linejoin="round">
<path d="M421 425L440 444 460 458 495 480 498 690H424L422 560 421 487z" fill="url(#s-side)"/>
<path d="M421 417L546 331 558 322 545 360 505 445 503 479 495 480 460 458 440 444 421 425z" fill="url(#s-roof)"/>
<path d="M460 458L500 403 541 338M423 485L440 498 462 513 494 534 503 533" fill="none"/>
<path d="M503 452L502 480H495z" fill="url(#s-strip)"/>
<path d="M494 480H502L505 690H497z" fill="#d8d8d8"/>
<path d="M504 455L530 420 561 408 600 425 621 452 623 690H505L502 478z" fill="#222"/>
<path d="M504 463L506 440 513 412 521 385 530 358 541 338 550 326 557 323 563 322 573 325 588 343 600 368 605 385 613 410 618 430 621 452 602 428 582 414 573 412 561 411 542 421 525 440 517 451 508 453z" fill="#3fd13f"/>
<path d="M561 411V465M503 479L561 465 621 453M503 478L517 452M516 452V475M516 510L524 495 540 478 561 465 582 468 603 485 622 509" fill="none"/>
</g>
<path d="M624 653V690" stroke="#ff0" stroke-width="2"/>
<path d="M708 395L713 368 720 343 728 325 738 308 748 296 759 289" fill="none" stroke="#20bd20" stroke-width="1.700"/>
<path d="M759 289L771 290 784 303 793 318 803 341 813 372 816 385 820 420 822 453 703 478V448L705 420 708 395" fill="none" stroke="#fff" stroke-width="2"/>
<path d="M758 287h4v4h-4zM706 393h4v4h-4zM701 476h4v4h-4zM820 451h4v4h-4z" fill="#fff"/>
<path d="M550 320h55v53h-55zM772 321h55v53h-55z" fill="none" stroke="#ffc000" stroke-width="4"/>
</svg>
<p class="note">先ほどと同じように、<br>Ctrlキーを押しながら両<br>方を選択したまま加算<br>ロフトを実行します。</p>
</section>
</main>
</body>
</html>
```
FILE: styles.css
```css
* { box-sizing: border-box; }
body {
  margin: 0;
  height: 100vh;
  display: flex;
  flex-direction: column;
  overflow: hidden;
  background: #f0f0f0;
  color: #000;
  font: 12px/20px "Noto Sans", "Noto Sans CJK JP", sans-serif;
  font-feature-settings: "palt";
}
button, select { font: inherit; color: inherit; border: 0; padding: 0; background: none; }
.sprite { position: absolute; width: 0; height: 0; }
.tail { display: flex; justify-content: flex-end; overflow: hidden; white-space: nowrap; }

.menubar {
  display: grid;
  grid-template-columns: 42px 38px 39px 41px 46px 35px 61px 23px 61px auto;
  gap: 16px;
  justify-content: start;
  height: 27px;
  padding-top: 7px;
  background: #fff;
  font-family: "Noto Sans CJK JP", "Noto Sans", sans-serif;
  white-space: nowrap;
  flex: none;
}
.menubar a { color: #000; text-decoration: none; }

.toolbar {
  display: flex;
  align-items: center;
  flex: none;
  height: 34px;
  padding-top: 2px;
  border-bottom: 1px solid #b4b4b4;
  box-shadow: inset 0 1px #fff;
  overflow: hidden;
}
.tool { flex: none; width: 31px; height: 30px; display: grid; place-items: center; }
.tool:first-child { margin-left: -5px; }
.tool svg { width: 24px; height: 24px; display: block; }
.drop { flex: none; width: 12px; height: 30px; display: grid; place-items: center; }
.drop::before { content: ""; border: 4px solid transparent; border-top-color: #222; border-bottom: 0; }
.drop.dim::before { border-top-color: #888; }
.sep { flex: none; width: 6px; height: 24px; border-left: 1px solid #c8c8c8; margin-left: 2px; margin-right: -2px; }
.grip { flex: none; width: 12px; height: 34px; border-left: 1px solid #b4b4b4; margin-left: 2px; margin-right: -2px; padding: 4px 0 0 4px; }
.grip::before { content: ""; display: block; width: 2px; height: 26px; background: repeating-linear-gradient(#b4b4b4 0 2px, transparent 2px 4px); }

.combo { display: flex; align-items: center; flex: none; width: 151px; height: 22px; padding: 0 4px; margin-left: 1px; border: 1px solid #adadad; background: #e3e3e3; }
.combo svg { width: 16px; height: 16px; flex: none; }
.combo select { appearance: none; flex: 1; padding-left: 3px; outline: 0; font-family: "Noto Sans CJK JP", sans-serif; }
.combo .chev { width: 9px; height: 9px; color: #555; }

.work { flex: 1; min-height: 0; display: flex; }
.dock { flex: 0 0 347px; display: flex; flex-direction: column; min-height: 0; padding-top: 2px; }
.dock-title { display: flex; align-items: center; flex: none; height: 19px; width: 343px; padding-right: 6px; background: #dadada; border: 1px solid #bcbcbc; border-left: 0; }
.dock-title .tail { width: 50px; margin-right: auto; }
.dock-title button { width: 10px; height: 10px; margin-left: 11px; }
.dock-title svg { display: block; width: 10px; height: 10px; }
.tabs { display: flex; align-items: flex-end; flex: none; height: 21px; }
.tab { width: 45px; height: 19px; border: 1px solid #d9d9d9; border-bottom: 0; border-left: 0; }
.tab.on { width: 41px; height: 20px; background: #fff; }
.tab .tail { width: 28px; }
.pane { flex: 1; min-height: 0; width: 341px; padding: 1px 2px 5px 0; border: 1px solid #d9d9d9; border-left: 0; }
.treebox { display: grid; grid-template: minmax(0, 1fr) 17px / minmax(0, 1fr) 16px; height: 100%; border: 1px solid #828790; border-left: 0; background: #fff; }
.treecol { min-height: 0; overflow: hidden; }
.treehead { display: flex; height: 23px; line-height: 22px; }
.treehead span:first-child { width: 56px; }
.treehead span:last-child { flex: none; width: 26px; margin-left: auto; padding-left: 5px; overflow: hidden; white-space: nowrap; border-left: 1px solid #e2e2e2; }
.row { display: flex; height: 20px; }
.row.l1 { padding-left: 9px; }
.row.l2 { padding-left: 29px; }
.row.l3 { padding-left: 69px; }
.row.l1.leaf { padding-left: 29px; }
.row.l2.leaf { padding-left: 49px; }
.row button { flex: none; width: 20px; display: grid; place-items: center; color: #333; }
.row button svg { width: 10px; height: 10px; }
.row button.shut { color: #999; }
.item { flex: 1; display: flex; align-items: center; gap: 6px; padding-left: 3px; white-space: nowrap; }
.item svg { width: 16px; height: 16px; flex: none; }
.dim { color: #7d7d7d; }
.item.active { background: #e6e6ff; font-weight: 700; margin-right: 25px; }
.item.sel { background: #d9d9d9; }
.vbar { display: flex; flex-direction: column; align-items: center; background: #f0f0f0; padding: 5px 0 4px; color: #555; }
.vbar svg, .hbar svg { width: 9px; height: 9px; flex: none; }
.vtrack { flex: 1; width: 15px; display: flex; flex-direction: column; justify-content: flex-end; padding-bottom: 8px; }
.vtrack i { height: 73px; background: #cdcdcd; }
.hbar { grid-column: 1 / 3; display: flex; align-items: center; background: #f0f0f0; border-top: 1px solid #fff; color: #555; }
.hbar i { width: 290px; height: 15px; margin: 0 12px 0 6px; background: #cdcdcd; }
.props { flex: none; width: 338px; height: 86px; padding: 2px 3px 0 0; border-right: 1px solid #d9d9d9; }
.props table { width: 334px; height: 84px; border-collapse: collapse; background: #fff; border-top: 1px solid #828790; border-right: 1px solid #828790; display: block; }
.props tbody, .props thead { display: block; }
.props tr { display: flex; }
.props th { font-weight: 400; text-align: left; padding: 0; height: 23px; line-height: 23px; }
.props th:first-child { width: 91px; border-right: 1px solid #dcdcdc; }
.props th:last-child { padding-left: 4px; }
.props th .tail { width: 43px; }
.props td { padding: 0; }
.props .group td { flex: 1; height: 20px; background: #a0a0a0; color: #fff; }
.props .group .tail { width: 19px; }
.props .prop { margin-left: 11px; background: #f5f5f5; border-bottom: 1px solid #d9d9d9; }
.props .prop td:first-child { width: 80px; padding-left: 3px; border-right: 1px solid #dcdcdc; }
.props .prop td:last-child { padding-left: 3px; }

.view { position: relative; flex: 1; min-width: 0; overflow: hidden; background: linear-gradient(#333366, #707090); }
.scene { display: block; width: 100%; height: 100%; }
.note { position: absolute; left: 160px; top: 346px; margin: 0; padding: 4px 10px 14px 9px; width: 218px; border: 1px solid #b0b0b0; background: #fff; font: 700 18px/31px Lato, "Noto Sans CJK JP", sans-serif; font-feature-settings: normal; white-space: nowrap; }
```
